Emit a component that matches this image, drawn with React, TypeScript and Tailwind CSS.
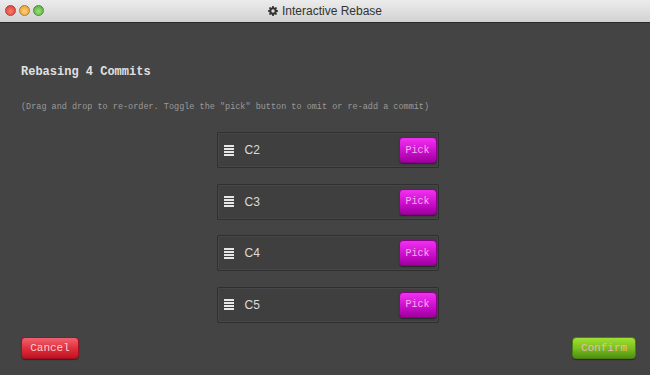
import React from 'react';

const commits = ['C2', 'C3', 'C4', 'C5'];

function Gear() {
  return (
    <svg width="10" height="10" viewBox="0 0 16 16" className="mr-[4px]">
      <path
        fill="#333"
        d="M6.8 0h2.4l.4 2.2 1.3.6 1.9-1.3 1.7 1.7-1.3 1.9.6 1.3 2.2.4v2.4l-2.2.4-.6 1.3 1.3 1.9-1.7 1.7-1.9-1.3-1.3.6-.4 2.2H6.8l-.4-2.2-1.3-.6-1.9 1.3-1.7-1.7 1.3-1.9-.6-1.3L0 9.2V6.8l2.2-.4.6-1.3-1.3-1.9 1.7-1.7 1.9 1.3 1.3-.6zM8 5.3a2.7 2.7 0 100 5.4 2.7 2.7 0 000-5.4z"
      />
    </svg>
  );
}

function Row({ name }: { name: string }) {
  return (
    <div className="flex items-center h-[36px] w-[222px] border border-[#2f2f2f] bg-[#3f3f3f] rounded-[2px] pl-[6px] pr-[1px] shadow-[inset_0_0_0_1px_#474747]">
      <div className="flex flex-col gap-[1px] w-[10px]">
        <span className="h-[2px] bg-[#e6e6e6]" />
        <span className="h-[2px] bg-[#e6e6e6]" />
        <span className="h-[2px] bg-[#e6e6e6]" />
        <span className="h-[2px] bg-[#e6e6e6]" />
      </div>
      <span className="ml-[11px] text-[12px] text-[#dcdcdc] font-['Liberation_Sans',sans-serif]">{name}</span>
      <button className="ml-auto w-[38px] h-[26px] rounded-[4px] bg-gradient-to-b from-[#f030f0] via-[#d010d0] to-[#a000a0] border border-[#8a008a] text-[10px] text-[#f5b0f0] font-['Liberation_Mono',monospace] shadow-[0_1px_1px_rgba(0,0,0,0.4)]">
        Pick
      </button>
    </div>
  );
}

export default function App() {
  return (
    <div className="w-[650px] h-[375px] flex flex-col bg-[#444444] overflow-hidden font-['Liberation_Mono',monospace]">
      <div className="relative h-[23px] flex items-center justify-center bg-gradient-to-b from-[#ececec] to-[#d2d2d2] border-b border-[#2a2a2a]">
        <div className="absolute left-[5px] top-[5px] flex gap-[3px]">
          <span className="w-[11px] h-[11px] rounded-full bg-[radial-gradient(circle_at_50%_60%,#ff7b6e,#d63a30)] border border-[#a9443c]" />
          <span className="w-[11px] h-[11px] rounded-full bg-[radial-gradient(circle_at_50%_60%,#ffd07a,#e29a2c)] border border-[#b07a30]" />
          <span className="w-[11px] h-[11px] rounded-full bg-[radial-gradient(circle_at_50%_60%,#9ae07a,#4caa36)] border border-[#4c8a3a]" />
        </div>
        <div className="flex items-center text-[12px] text-[#333] font-['Liberation_Sans',sans-serif]">
          <Gear />
          Interactive Rebase
        </div>
      </div>

      <div className="flex-1 flex flex-col px-[21px]">
        <h1 className="mt-[41px] text-[12px] leading-[16px] font-bold text-[#e0e0e0]">Rebasing 4 Commits</h1>
        <p className="mt-[21px] text-[8.5px] leading-[12px] text-[#9a9a9a]">
          (Drag and drop to re-order. Toggle the "pick" button to omit or re-add a commit)
        </p>
        <div className="mt-[19px] flex flex-col items-center gap-[15.5px] pl-[5px]">
          {commits.map((c) => (
            <Row key={c} name={c} />
          ))}
        </div>
        <div className="mt-auto mb-[16px] flex justify-between items-center">
          <button className="w-[58px] h-[22px] rounded-[4px] bg-gradient-to-b from-[#f06070] via-[#e0303c] to-[#c01020] border border-[#a01020] text-[11px] text-[#ffd0d8] shadow-[0_1px_1px_rgba(0,0,0,0.4)]">
            Cancel
          </button>
          <button className="mr-[-7px] w-[64px] h-[22px] rounded-[4px] bg-gradient-to-b from-[#a0e030] via-[#7cc020] to-[#4e9010] border border-[#4a8010] text-[11px] text-[#e8b8b0] shadow-[0_1px_1px_rgba(0,0,0,0.4)]">
            Confirm
          </button>
        </div>
      </div>
    </div>
  );
}
